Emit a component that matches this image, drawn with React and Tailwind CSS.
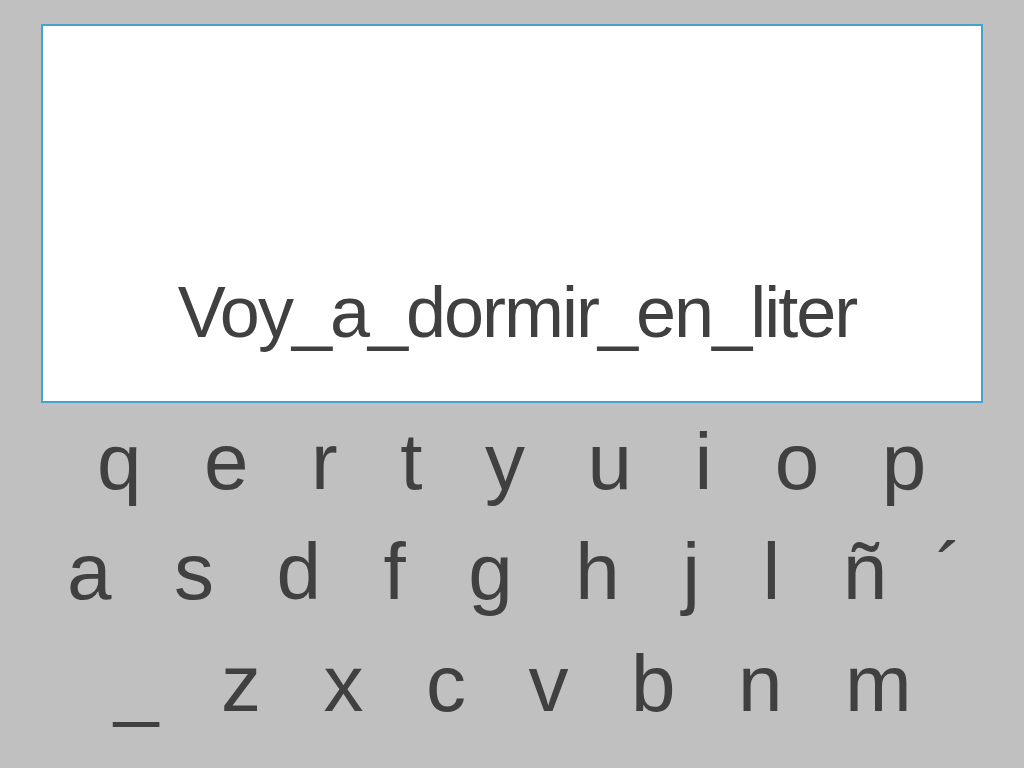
export default function App() {
  const row1 = ["q", "e", "r", "t", "y", "u", "i", "o", "p"];
  const row2 = ["a", "s", "d", "f", "g", "h", "j", "l", "ñ"];
  const row3 = ["_", "z", "x", "c", "v", "b", "n", "m"];
  const font = { fontFamily: '"Liberation Sans", Arial, sans-serif' };
  return (
    <div
      className="w-[1024px] h-[768px] bg-[#c0c0c0] text-[#404040] overflow-hidden pt-[24px] pl-[41px]"
      style={font}
    >
      <div className="w-[942px] h-[379px] bg-white border-2 border-[#45a3cc] pt-[250px] pl-[10px] text-center text-[72px] leading-none tracking-[-2px]">
        Voy_a_dormir_en_liter
      </div>
      <div className="mt-[4px] -ml-[41px] text-[80px]">
        <div className="h-[110px] leading-[110px] flex gap-[62.5px] pl-[97px] whitespace-pre">
          {row1.map((c) => (
            <span key={c}>{c}</span>
          ))}
        </div>
        <div className="h-[110px] leading-[110px] flex gap-[62.5px] pl-[67px] whitespace-pre">
          {row2.map((c) => (
            <span key={c}>{c}</span>
          ))}
          <span className="-ml-[14px]">´</span>
        </div>
        <div className="h-[112px] leading-[114px] flex gap-[62.5px] pl-[114px] whitespace-pre">
          {row3.map((c) => (
            <span key={c}>{c}</span>
          ))}
        </div>
      </div>
    </div>
  );
}
